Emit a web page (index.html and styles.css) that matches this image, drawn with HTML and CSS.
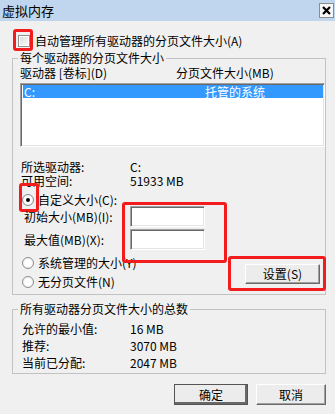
FILE: index.html
```html
<!DOCTYPE html>
<html lang="zh-CN">
<head>
    <meta charset="UTF-8">
    <meta name="viewport" content="width=device-width, initial-scale=1.0">
    <title>虚拟内存</title>
    <link rel="stylesheet" href="styles.css">
</head>
<body>

<div class="window">
    <div class="titlebar">
        <span class="title">虚拟内存</span>
        <span class="close">
            <svg width="9" height="9" viewBox="0 0 9 9"><path d="M1 1L8 8M8 1L1 8" stroke="#000" stroke-width="2.2"/></svg>
        </span>
    </div>

    <div class="dialog">
        <div class="check-row">
            <span class="checkbox mark mark-check"></span>
            <span>自动管理所有驱动器的分页文件大小(A)</span>
        </div>

        <fieldset class="group group-drives">
            <legend>每个驱动器的分页文件大小</legend>
            <div class="list-head">
                <span>驱动器 [卷标](D)</span>
                <span>分页文件大小(MB)</span>
            </div>
            <div class="listbox">
                <div class="list-row selected">
                    <span>C:</span>
                    <span>托管的系统</span>
                </div>
            </div>

            <div class="info">
                <span>所选驱动器:</span><span>C:</span>
                <span>可用空间:</span><span>51933 MB</span>
            </div>

            <div class="radio-row first">
                <span class="radio on mark mark-radio"></span>
                <span>自定义大小(C):</span>
            </div>
            <div class="sizes mark mark-inputs">
                <div class="size-row">
                    <span class="size-label">初始大小(MB)(I):</span>
                    <span class="field"></span>
                </div>
                <div class="size-row">
                    <span class="size-label">最大值(MB)(X):</span>
                    <span class="field"></span>
                </div>
            </div>

            <div class="bottom-row">
                <div class="radios">
                    <div class="radio-row">
                        <span class="radio"></span>
                        <span>系统管理的大小(Y)</span>
                    </div>
                    <div class="radio-row">
                        <span class="radio"></span>
                        <span>无分页文件(N)</span>
                    </div>
                </div>
                <button class="btn btn-set mark mark-button">设置(S)</button>
            </div>
        </fieldset>

        <fieldset class="group group-total">
            <legend>所有驱动器分页文件大小的总数</legend>
            <div class="totals">
                <span>允许的最小值:</span><span>16 MB</span>
                <span>推荐:</span><span>3070 MB</span>
                <span>当前已分配:</span><span>2047 MB</span>
            </div>
        </fieldset>

        <div class="actions">
            <button class="btn btn-ok">确定</button>
            <button class="btn btn-cancel">取消</button>
        </div>
    </div>
</div>

</body>
</html>
```

FILE: styles.css
```css
* {
    box-sizing: border-box;
}
body {
    margin: 0;
    background-color: #f0f0f0;
    font-family: "Noto Sans CJK SC", "Liberation Sans", sans-serif;
    font-size: 12px;
    color: #000;
}
.window {
    width: 335px;
    height: 414px;
}
.titlebar {
    height: 21px;
    background-color: #bfd6ee;
    display: flex;
    align-items: center;
    justify-content: space-between;
    padding: 0 1px 0 2px;
}
.title {
    font-size: 13px;
    line-height: 21px;
}
.close {
    width: 15px;
    height: 15px;
    border: 1px solid #8c8c8c;
    background-color: #f7f7f7;
    display: flex;
    align-items: center;
    justify-content: center;
}
.dialog {
    padding: 10px 9px 0 12px;
}
.check-row {
    display: flex;
    align-items: center;
    gap: 5px;
    height: 20px;
    padding-left: 6px;
    line-height: 14px;
}
.checkbox {
    width: 12px;
    height: 12px;
    border: 1px solid #8e8f8f;
    background: linear-gradient(135deg, #dcdcdc, #fafafa);
    box-shadow: inset 0 0 0 1px #fff;
}

/* group boxes */
.group {
    margin: 0;
    padding: 0 0 5px 7px;
    border: 1px solid #c2c2c2;
    min-width: 0;
}
.group legend {
    margin-left: -2px;
    padding: 0 2px;
    line-height: 14px;
}
.list-head {
    display: grid;
    grid-template-columns: 156px auto;
    margin-top: 1px;
    line-height: 14px;
}
.listbox {
    margin-top: 3px;
    height: 64px;
    background-color: #fff;
    border: 1px solid;
    border-color: #a0a0a0 #fff #fff #a0a0a0;
    box-shadow: inset 1px 1px #696969, inset -1px -1px #e3e3e3;
    padding: 1px 1px 0 2px;
}
.list-row {
    display: grid;
    grid-template-columns: 181px auto;
    height: 13px;
    line-height: 13px;
    padding-left: 1px;
}
.list-row.selected {
    background-color: #3399ff;
    color: #fff;
}
.info {
    margin-top: 13px;
    padding-left: 1px;
    display: grid;
    grid-template-columns: 109px auto;
    line-height: 14px;
}

/* radios and size fields */
.radio-row {
    display: flex;
    align-items: center;
    gap: 4px;
    padding-left: 2px;
    height: 14px;
    line-height: 14px;
}
.radio-row.first {
    margin-top: 5px;
    height: 13px;
}
.radio {
    width: 12px;
    height: 12px;
    border-radius: 50%;
    border: 1px solid #8e8f8f;
    background: radial-gradient(circle, #fff 40%, #e2e2e2);
    display: flex;
    align-items: center;
    justify-content: center;
}
.radio.on::before {
    content: "";
    width: 4px;
    height: 4px;
    border-radius: 50%;
    background-color: #000;
}
.sizes {
    display: flex;
    flex-direction: column;
    gap: 2px;
}
.size-row {
    display: flex;
    align-items: center;
    padding-left: 4px;
    height: 21px;
}
.size-label {
    width: 106px;
    line-height: 14px;
}
.field {
    width: 75px;
    height: 21px;
    background-color: #fff;
    border: 1px solid;
    border-color: #a0a0a0 #fff #fff #a0a0a0;
    box-shadow: inset 1px 1px #696969, inset -1px -1px #e3e3e3;
}
.bottom-row {
    display: flex;
    justify-content: space-between;
    align-items: flex-start;
}
.radios {
    margin-top: 6px;
    display: flex;
    flex-direction: column;
    gap: 5px;
}

/* buttons */
.btn {
    font-family: inherit;
    font-size: 12px;
    color: #000;
    height: 20px;
    padding: 0;
    background-color: #ececec;
    border: 1px solid;
    border-color: #fff #696969 #696969 #fff;
    box-shadow: inset -1px -1px #a0a0a0;
    line-height: 16px;
}
.btn-set {
    width: 75px;
    margin-top: 14px;
    margin-right: 5px;
}
.group-total {
    margin-top: 7px;
    padding-bottom: 2px;
}
.totals {
    margin-top: 4px;
    padding-left: 2px;
    display: grid;
    grid-template-columns: 108px auto;
    line-height: 17px;
}
.actions {
    margin-top: 10px;
    display: flex;
    justify-content: flex-end;
    gap: 8px;
}
.actions .btn {
    height: 21px;
}
.btn-ok {
    width: 74px;
    outline: 1px solid #555;
    outline-offset: -1px;
    box-shadow: inset -2px -2px #696969;
}
.btn-cancel {
    width: 70px;
}

/* red annotation frames */
.mark {
    position: relative;
}
.mark::after {
    content: "";
    position: absolute;
    border: 3px solid #f21c1c;
    border-radius: 3px;
    pointer-events: none;
}
.mark-check::after {
    left: -6px;
    top: -7px;
    right: -4px;
    bottom: -5px;
}
.mark-radio::after {
    left: -4px;
    top: -12px;
    right: -6px;
    bottom: -7px;
}
.mark-inputs::after {
    left: 102px;
    width: 99px;
    top: -4px;
    height: 55px;
}
.mark-button::after {
    left: -18px;
    top: -9px;
    right: -7px;
    bottom: -8px;
}
```
